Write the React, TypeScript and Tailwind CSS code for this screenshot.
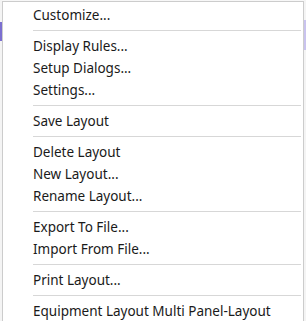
import React from "react";

type Entry = { label: string } | { sep: true };

const entries: Entry[] = [
  { label: "Customize..." },
  { sep: true },
  { label: "Display Rules..." },
  { label: "Setup Dialogs..." },
  { label: "Settings..." },
  { sep: true },
  { label: "Save Layout" },
  { sep: true },
  { label: "Delete Layout" },
  { label: "New Layout..." },
  { label: "Rename Layout..." },
  { sep: true },
  { label: "Export To File..." },
  { label: "Import From File..." },
  { sep: true },
  { label: "Print Layout..." },
  { sep: true },
  { label: "Equipment Layout Multi Panel-Layout" },
];

export default function App() {
  return (
    <div
      className="flex w-[306px] h-[321px] overflow-hidden bg-[#f7f7f7]"
      style={{ fontFamily: '"Noto Sans", "Open Sans", sans-serif' }}
    >
      <div className="flex flex-col w-[2px] shrink-0">
        <div className="h-[22px] bg-[#f4f4f4]" />
        <div className="h-[19px] bg-[#7b6fd0]" />
        <div className="flex-1 bg-[#f4f4f4]" />
      </div>
      <div className="flex-1 flex flex-col pt-px">
        <div className="flex-1 border-l border-r border-t border-[#cccccc] bg-white pt-[3px] flex flex-col">
          {entries.map((e, i) =>
            "sep" in e ? (
              <div key={i} className="h-[9px] pt-[3px] pl-[30px] pr-[2px]">
                <div className="h-px bg-[#d7d7d7]" />
              </div>
            ) : (
              <div
                key={i}
                className="h-[22px] shrink-0 flex items-center pl-[30px] text-[13.5px] leading-none text-[#1a1a1a] whitespace-nowrap"
              >
                {e.label}
              </div>
            )
          )}
        </div>
      </div>
      <div className="flex flex-col w-[2px] shrink-0">
        <div className="h-[20px] bg-[#f4f4f4]" />
        <div className="h-[30px] bg-[#c9c3ee]" />
        <div className="flex-1 bg-[#f4f4f4]" />
      </div>
    </div>
  );
}
